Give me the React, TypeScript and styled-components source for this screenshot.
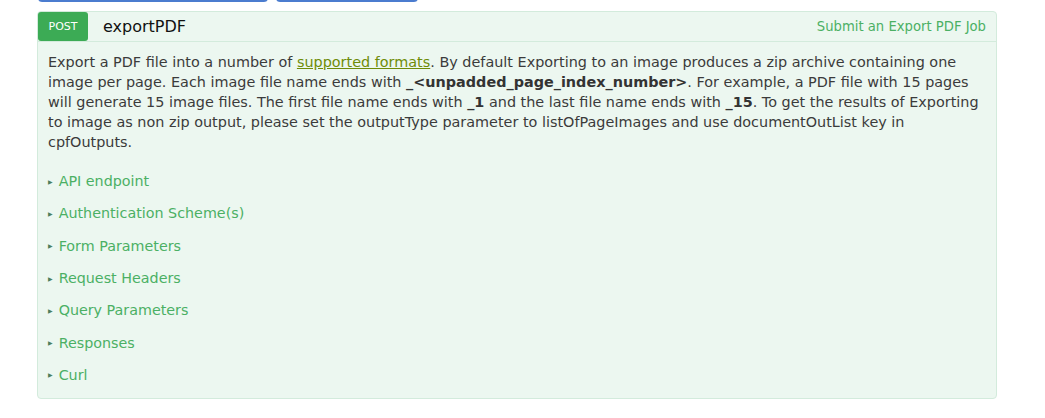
import React from 'react';
import styled, {createGlobalStyle} from 'styled-components';

const GlobalStyle = createGlobalStyle`
  body {
    margin: 0;
    background: #ffffff;
    font-family: "DejaVu Sans", "Liberation Sans", sans-serif;
  }
`;

const Page = styled.div`
  width: 1045px;
  height: 418px;
  overflow: hidden;
  padding: 0 48px 0 37px;
  box-sizing: border-box;
`;

const TabRow = styled.div`
  display: flex;
  gap: 8px;
  margin-top: -20px;
  padding-left: 1px;
  height: 22px;
`;

const Tab = styled.div<{w: number}>`
  width: ${p => p.w}px;
  height: 22px;
  box-sizing: border-box;
  border: 1px solid #4b7ccf;
  border-bottom-width: 2px;
  border-radius: 4px;
`;

const Card = styled.section`
  margin-top: 9px;
  border: 1px solid #d3ebdc;
  border-radius: 4px;
  background: #ecf7f0;
`;

const Header = styled.header`
  display: flex;
  align-items: center;
  height: 29px;
  border-bottom: 1px solid #d3ebdc;
`;

const Method = styled.span`
  display: flex;
  align-items: center;
  justify-content: center;
  width: 50px;
  height: 29px;
  background: #3cab55;
  color: #ffffff;
  font-size: 11px;
  border-radius: 3px;
`;

const Title = styled.h3`
  margin: 0 0 0 15px;
  font-size: 16px;
  font-weight: normal;
  color: #111;
  flex: 1;
`;

const Summary = styled.a`
  color: #4bb064;
  font-size: 13.2px;
  margin-right: 10px;
  text-decoration: none;
`;

const Body = styled.div`
  padding: 10px 10px 7px 10px;
`;

const Text = styled.p`
  margin: 0 0 13px;
  font-size: 14.4px;
  line-height: 20px;
  color: #3b3b3b;

  a {
    color: #6f8c08;
    text-decoration: underline;
  }

  b {
    color: #333;
  }
`;

const Fold = styled.div`
  display: flex;
  align-items: center;
  height: 32.3px;
  color: #4bb064;
  font-size: 14.3px;
`;

const Arrow = styled.span`
  font-size: 6px;
  margin-right: 6px;
  color: #4d7f5c;
`;

const sections = [
  'API endpoint',
  'Authentication Scheme(s)',
  'Form Parameters',
  'Request Headers',
  'Query Parameters',
  'Responses',
  'Curl',
];

export default function App() {
  return (
    <Page>
      <GlobalStyle />
      <TabRow>
        <Tab w={230} />
        <Tab w={142} />
      </TabRow>
      <Card>
        <Header>
          <Method>POST</Method>
          <Title>exportPDF</Title>
          <Summary>Submit an Export PDF Job</Summary>
        </Header>
        <Body>
          <Text>
            Export a PDF file into a number of <a>supported formats</a>. By default Exporting to an image produces a zip
            archive containing one image per page. Each image file name ends with <b>_&lt;unpadded_page_index_number&gt;</b>.
            For example, a PDF file with 15 pages will generate 15 image files. The first file name ends with <b>_1</b> and
            the last file name ends with <b>_15</b>. To get the results of Exporting to image as non zip output, please set
            the outputType parameter to listOfPageImages and use documentOutList key in cpfOutputs.
          </Text>
          {sections.map(s => (
            <Fold key={s}>
              <Arrow>▶</Arrow>
              {s}
            </Fold>
          ))}
        </Body>
      </Card>
    </Page>
  );
}
